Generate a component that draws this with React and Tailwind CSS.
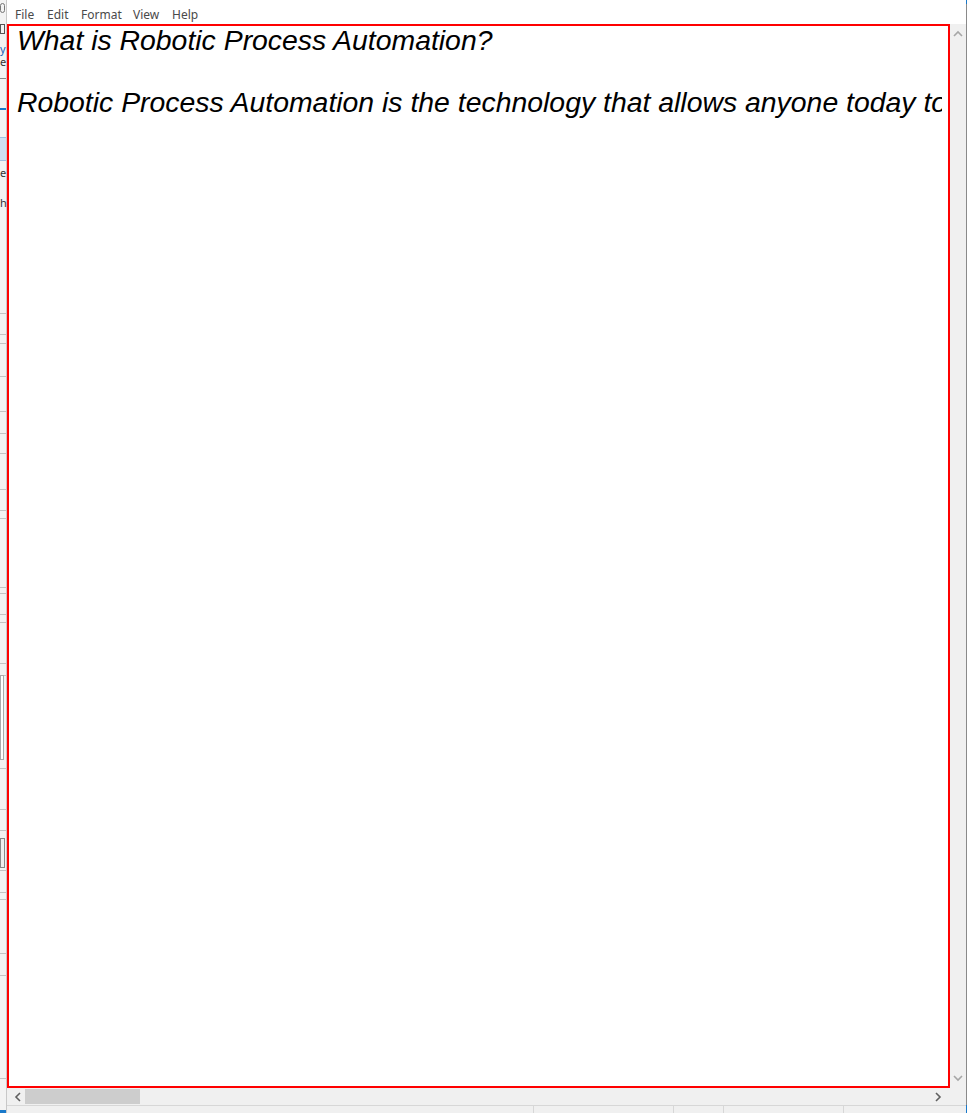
import React from "react";

const Chevron = ({ dir, className }) => {
  const paths = {
    up: "M1 6 L5 2 L9 6",
    down: "M1 2 L5 6 L9 2",
    left: "M6 1 L2 5 L6 9",
    right: "M2 1 L6 5 L2 9",
  };
  const vertical = dir === "up" || dir === "down";
  return (
    <svg
      width={vertical ? 10 : 8}
      height={vertical ? 8 : 10}
      viewBox={vertical ? "0 0 10 8" : "0 0 8 10"}
      className={className}
    >
      <path d={paths[dir]} fill="none" stroke="currentColor" strokeWidth="1.6" />
    </svg>
  );
};

// thin grey lines of the window that sits behind notepad
const backLines = [
  313, 334, 343, 376, 411, 433, 453, 489, 510, 518, 587, 593, 614, 622, 663,
  675, 768, 809, 830, 870, 892, 899, 953, 975, 1078,
];

const App = () => {
  return (
    <div
      className="flex h-[1113px] w-[974px] overflow-hidden bg-white"
      style={{ fontFamily: '"Noto Sans", "Liberation Sans", sans-serif' }}
    >
      {/* window behind, peeking out on the left */}
      <div className="relative h-full w-[7px] bg-[#f3f3f3] border-r border-[#c8c8c8]">
        <div className="absolute left-0 top-[3px] h-[10px] w-[5px] border border-[#777] rounded-sm" />
        <div className="absolute left-0 top-[24px] h-[10px] w-[5px] border border-[#555]" />
        <div className="absolute left-0 top-[43px] text-[11px] leading-none text-[#1a5fb4]">y</div>
        <div className="absolute left-0 top-[56px] text-[11px] leading-none text-[#333]">e</div>
        <div className="absolute left-0 top-[78px] h-[1px] w-full bg-[#888]" />
        <div className="absolute left-0 top-[108px] h-[2px] w-full bg-[#1979ca]" />
        <div className="absolute left-0 top-[137px] h-[24px] w-full bg-[#cfe0f2] border-y border-[#9fbfe0]" />
        <div className="absolute left-0 top-[167px] text-[11px] leading-none text-[#333]">e</div>
        <div className="absolute left-0 top-[197px] text-[11px] leading-none text-[#333]">h</div>
        {backLines.map((y) => (
          <div
            key={y}
            className="absolute left-0 h-[1px] w-full bg-[#c4c4c4]"
            style={{ top: y }}
          />
        ))}
        <div className="absolute left-0 top-[675px] h-[85px] w-[4px] border border-[#aaa] bg-white" />
        <div className="absolute left-0 top-[838px] h-[30px] w-[5px] border border-[#888] bg-[#eee]" />
        <div className="absolute left-0 bottom-0 h-[3px] w-full bg-[#1979ca]" />
      </div>

      {/* notepad window */}
      <div className="flex h-full w-[959px] flex-col">
        {/* menu */}
        <div className="flex h-[24px] items-start bg-white pl-[8px] pt-[8px] text-[12px] leading-[14px] text-[#4a4a4a]">
          <span className="w-[32px]">File</span>
          <span className="w-[34px]">Edit</span>
          <span className="w-[52px]">Format</span>
          <span className="w-[39px]">View</span>
          <span>Help</span>
        </div>

        <div className="flex h-[1064px]">
          {/* edit area */}
          <div className="relative h-full w-[943px] bg-white">
            <div
              className="ml-[10px] mr-[8px] h-full overflow-hidden whitespace-nowrap pt-[1px] text-[28.4px] italic leading-[31px] text-black"
              style={{ fontFamily: '"Liberation Sans", Arial, sans-serif' }}
            >
              <div>What is Robotic Process Automation?</div>
              <div>&nbsp;</div>
              <div>
                Robotic Process Automation is the technology that allows anyone
                today to configure computer software
              </div>
            </div>
            <div className="pointer-events-none absolute inset-0 border-2 border-[#ff0000]" />
          </div>
          {/* vertical scrollbar */}
          <div className="flex h-full w-[16px] flex-col items-center justify-between bg-[#f0f0f0] pb-[6px] pt-[6px] text-[#a6a6a6]">
            <Chevron dir="up" />
            <Chevron dir="down" />
          </div>
        </div>

        {/* horizontal scrollbar */}
        <div className="flex h-[17px]">
          <div className="flex w-[943px] items-center bg-[#f0f0f0] text-[#606060]">
            <div className="flex w-[18px] justify-center pl-[4px]">
              <Chevron dir="left" />
            </div>
            <div className="h-[15px] w-[115px] bg-[#cdcdcd]" />
            <div className="flex-1" />
            <div className="flex w-[18px] justify-center pr-[6px]">
              <Chevron dir="right" />
            </div>
          </div>
          <div className="w-[16px] bg-[#f0f0f0]" />
        </div>

        {/* status bar */}
        <div className="flex h-[8px] border-t border-[#d7d7d7] bg-[#f0f0f0]">
          <div className="w-[527px] border-r border-[#d7d7d7]" />
          <div className="w-[140px] border-r border-[#d7d7d7]" />
          <div className="w-[50px] border-r border-[#d7d7d7]" />
          <div className="w-[120px] border-r border-[#d7d7d7]" />
          <div className="flex-1" />
        </div>
      </div>

      {/* window edge */}
      <div className="relative h-full w-[1px] bg-[#8a8a8a]">
        <div className="absolute left-0 top-0 h-[4px] w-full bg-[#1979ca]" />
        <div className="absolute bottom-0 left-0 h-[8px] w-full bg-[#1979ca]" />
      </div>
      <div className="h-full flex-1 bg-white" />
    </div>
  );
};

export default App;
